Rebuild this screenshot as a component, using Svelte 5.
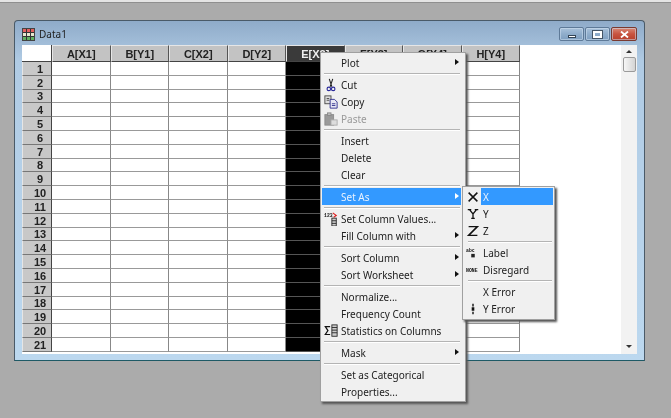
<script>
  const cols = ['A[X1]','B[Y1]','C[X2]','D[Y2]','E[X2]','F[Y3]','G[X4]','H[Y4]'];
  const rows = Array.from({length:21},(_,i)=>i+1);
  const menu = [
    {t:'Plot',arrow:true},{sep:true},
    {t:'Cut',icon:'cut'},{t:'Copy',icon:'copy'},{t:'Paste',icon:'paste',off:true},{sep:true},
    {t:'Insert'},{t:'Delete'},{t:'Clear'},{sep:true},
    {t:'Set As',arrow:true,on:true},{sep:true},
    {t:'Set Column Values...',icon:'values'},{t:'Fill Column with',arrow:true},{sep:true},
    {t:'Sort Column',arrow:true},{t:'Sort Worksheet',arrow:true},{sep:true},
    {t:'Normalize...'},{t:'Frequency Count'},{t:'Statistics on Columns',icon:'stats'},{sep:true},
    {t:'Mask',arrow:true},{sep:true},
    {t:'Set as Categorical'},{t:'Properties...'}
  ];
  const sub = [
    {t:'X',icon:'X',on:true},{t:'Y',icon:'Y'},{t:'Z',icon:'Z'},{sep:true},
    {t:'Label',icon:'abc'},{t:'Disregard',icon:'none'},{sep:true},
    {t:'X Error'},{t:'Y Error',icon:'yerr'}
  ];
</script>

{#snippet glyph(name)}
  {#if name==='cut'}
    <svg class="ico" viewBox="0 0 16 16"><path d="M6 1l3 9M10 1L7 10" stroke="#222" stroke-width="1.2" fill="none"/><circle cx="5.5" cy="12.5" r="2" fill="none" stroke="#2a2a9a" stroke-width="1.3"/><circle cx="10.5" cy="12.5" r="2" fill="none" stroke="#2a2a9a" stroke-width="1.3"/></svg>
  {:else if name==='copy'}
    <svg class="ico" viewBox="0 0 16 16"><rect x="1" y="1" width="7" height="9" fill="#ddd" stroke="#444"/><path d="M3 4h3M3 6h3" stroke="#444"/><path d="M7 5h5l3 3v7H7z" fill="#e8e8f4" stroke="#2a2a8a"/><path d="M9 10h4M9 12h4" stroke="#2a2a8a"/></svg>
  {:else if name==='paste'}
    <svg class="ico" viewBox="0 0 16 16"><rect x="1" y="3" width="10" height="12" fill="#9a9a9a" stroke="#8a8a8a"/><rect x="4" y="1" width="4" height="3" fill="#bbb" stroke="#888"/><rect x="8" y="9" width="7" height="6" fill="#ddd" stroke="#aaa"/></svg>
  {:else if name==='values'}
    <svg class="ico" viewBox="0 0 16 16"><text x="0" y="6" class="tiny">123</text><path d="M10 1l4 3-3 2" stroke="#d22" stroke-width="1.3" fill="none"/><rect x="9" y="7" width="5" height="9" fill="#ccc" stroke="#222"/><path d="M9 10h5M9 13h5" stroke="#222"/></svg>
  {:else if name==='stats'}
    <svg class="ico" viewBox="0 0 16 16"><path d="M7 3H1.5l3 4.5-3 4.5H7" fill="none" stroke="#111" stroke-width="1.4"/><rect x="9" y="1" width="6" height="13" fill="#ccc" stroke="#222"/><path d="M9 4h6M9 7h6M9 10h6" stroke="#222"/></svg>
  {:else if name==='X'}
    <svg class="ico" viewBox="0 0 16 16"><path d="M3 3l10 10M13 3L3 13" stroke="#111" stroke-width="1.7" fill="none"/></svg>
  {:else if name==='Y'}
    <svg class="ico" viewBox="0 0 16 16"><path d="M2 3h4M10 3h4M4 3l4 5 4-5M8 8v5M6 13h4" stroke="#111" stroke-width="1.5" fill="none"/></svg>
  {:else if name==='Z'}
    <svg class="ico" viewBox="0 0 16 16"><path d="M3 3h10L3 13h10" stroke="#111" stroke-width="1.7" fill="none"/></svg>
  {:else if name==='abc'}
    <svg class="ico" viewBox="0 0 16 16"><text x="0" y="7" class="tiny">abc</text><rect x="6" y="9" width="4" height="4" fill="#222"/></svg>
  {:else if name==='none'}
    <svg class="ico" viewBox="0 0 16 16"><text x="0" y="10" class="tiny">NONE</text></svg>
  {:else if name==='yerr'}
    <svg class="ico" viewBox="0 0 16 16"><path d="M8 2v3M8 11v3" stroke="#111" stroke-width="1.6"/><rect x="6.5" y="6" width="3" height="4" fill="#111"/></svg>
  {/if}
{/snippet}

{#snippet items(list)}
  {#each list as m}
    {#if m.sep}
      <div class="sep"></div>
    {:else}
      <div class="item" class:on={m.on} class:off={m.off}>
        <span class="slot">{#if m.icon}{@render glyph(m.icon)}{/if}</span>
        <span class="label">{m.t}</span>
        {#if m.arrow}<span class="arrow"></span>{/if}
      </div>
    {/if}
  {/each}
{/snippet}

<div class="desk">
  <div class="topstrip"></div>
  <div class="window">
    <div class="titlebar">
      <svg class="appicon" viewBox="0 0 13 13"><rect x="0.5" y="0.5" width="12" height="12" fill="#e8e8d0" stroke="#444"/><rect x="1" y="1" width="11" height="3" fill="#e06060"/><rect x="1" y="9" width="11" height="3" fill="#60b060"/><path d="M4.5 1v11M8.5 1v11M1 4.5h11M1 8.5h11" stroke="#333"/></svg>
      <span class="title">Data1</span>
      <div class="ctrls">
        <span class="btn"><i class="min"></i></span>
        <span class="btn"><i class="max"></i></span>
        <span class="btn close"><svg viewBox="0 0 9 7" width="9" height="7"><path d="M1 0.5l7 6M8 0.5l-7 6" stroke="#fff" stroke-width="1.8"/></svg></span>
      </div>
    </div>
    <div class="client">
      <div class="sheet">
        <div class="grid">
          <div class="corner"></div>
          {#each cols as c,i}<div class="chead" class:sel={i===4}>{c}</div>{/each}
          {#each rows as r}
            <div class="rhead">{r}</div>
            {#each cols as c,i}<div class="cell" class:sel={i===4}></div>{/each}
          {/each}
        </div>
      </div>
      <div class="scroll">
        <span class="up"></span>
        <span class="thumb"></span>
        <span class="down"></span>
      </div>
    </div>
  </div>

  <div class="menu main">{@render items(menu)}</div>
  <div class="menu subm">{@render items(sub)}</div>
</div>

<style>
  :global(body){margin:0;background:#ababab;overflow:hidden}
  .desk{position:relative;width:671px;height:418px;background:#ababab;overflow:hidden;padding:20px 0 0 14px;box-sizing:border-box;font-family:"Noto Sans",sans-serif;filter:blur(.3px)}
  .topstrip{position:absolute;left:0;top:0;width:671px;height:3px;background:#e4e4e4;border-bottom:1px solid #8f8f8f;box-sizing:border-box}
  .window{width:631px;height:341px;box-sizing:border-box;border:1px solid #4a5a68;border-bottom-color:#1e5a66;border-radius:4px 4px 0 0;background:linear-gradient(#8fabc9,#b0cbe4 40px,#bcd8ef);padding:0 7px 6px 7px;display:flex;flex-direction:column}
  .titlebar{height:24px;display:flex;align-items:center;flex:none;position:relative}
  .appicon{width:13px;height:13px;margin-right:4px;margin-top:2px}
  .title{font-size:10px;color:#222;margin-top:2px}
  .ctrls{margin-left:auto;display:flex;gap:1px;align-self:flex-start;margin-top:6px;margin-right:0}
  .btn{width:25px;height:14px;border:1px solid #5e7a98;border-radius:2px;background:linear-gradient(#a9c2da,#8fadcb 50%,#7f9fc0);display:flex;align-items:center;justify-content:center;box-shadow:inset 0 0 0 1px #cfe0f088;box-sizing:border-box}
  .btn.close{width:26px;border-color:#7a3a30;background:linear-gradient(#d88a78,#c8533f 50%,#b8402c)}
  .min{width:8px;height:3px;background:#fff;border:1px solid #345;box-sizing:border-box;margin-top:4px}
  .max{width:9px;height:7px;border:2px solid #fff;outline:1px solid #456;box-sizing:border-box}
  .client{flex:1;display:flex;background:#fff;min-height:0}
  .sheet{flex:1;overflow:hidden;background:#fff}
  .grid{display:grid;grid-template-columns:30px repeat(8,58.5px);grid-template-rows:17px repeat(21,13.8px);width:498px}
  .corner{background:#fff;border-right:1px solid #444;border-bottom:1px solid #444}
  .chead{background:#c3c3c3;border-left:1px solid #e6e6e6;border-top:1px solid #e6e6e6;border-right:1px solid #555;border-bottom:1px solid #444;box-sizing:border-box;font:bold 11px "Liberation Sans",sans-serif;color:#222;display:flex;align-items:center;justify-content:center}
  .chead.sel{background:#3a3a3a;color:#eee}
  .rhead{background:#c8c8c8;border-left:1px solid #e6e6e6;border-right:1px solid #444;border-bottom:1px solid #777;box-sizing:border-box;font:bold 11px "Liberation Sans",sans-serif;color:#222;display:flex;align-items:flex-end;justify-content:center;line-height:11px;overflow:hidden;padding-left:6px}
  .cell{background:#fff;border-right:1px solid #888;border-bottom:1px solid #999;box-sizing:border-box}
  .cell.sel{background:#000;border-color:#555}
  .scroll{width:16px;flex:none;background:#f2f2f2;display:flex;flex-direction:column;align-items:center;padding-top:5px;box-sizing:border-box}
  .up{width:0;height:0;border:3px solid transparent;border-top:0;border-bottom:3px solid #333}
  .down{width:0;height:0;border:3px solid transparent;border-bottom:0;border-top:3px solid #333;margin-top:auto;margin-bottom:6px}
  .thumb{width:11px;height:13px;background:linear-gradient(90deg,#f6f6f6,#d4d4d4);border:1px solid #9a9a9a;border-radius:2px;margin-top:4px}
  .menu{position:absolute;background:#f0f0f0;border:1px solid #a0a0a0;box-sizing:border-box;box-shadow:2px 2px 2px #555;font-size:10px;color:#222}
  .main{left:320px;top:52px;width:146px;height:350px;padding:1px 4px 2px 0}
  .main .item{margin-left:1px}
  .subm{left:462px;top:186px;width:93px;height:134px;padding:1px 1px 1px 2px}
  .item{height:17px;display:flex;align-items:center;position:relative}
  .slot{width:18px;height:17px;flex:none;display:flex;align-items:center;justify-content:center}
  .subm .slot{width:16px}
  .sep{height:1px;background:#b4b4b4;margin:2px 1px 2px 3px;box-shadow:0 1px 0 #fff}
  .label{flex:1;white-space:nowrap;padding-left:1px}
  .subm .label{padding-left:2px}
  .on{background:#3399ff;color:#e8f2ff}
  .subm .on .slot{background:#f0f0f0}
  .off{color:#999}
  .arrow{position:absolute;right:2px;top:5px;width:0;height:0;border:3.5px solid transparent;border-right:0;border-left:4px solid #111}
  .on .arrow{border-left-color:#fff}
  .ico{width:14px;height:14px}
  .tiny{font:bold 5.5px "Liberation Mono",monospace;fill:#111}
</style>
